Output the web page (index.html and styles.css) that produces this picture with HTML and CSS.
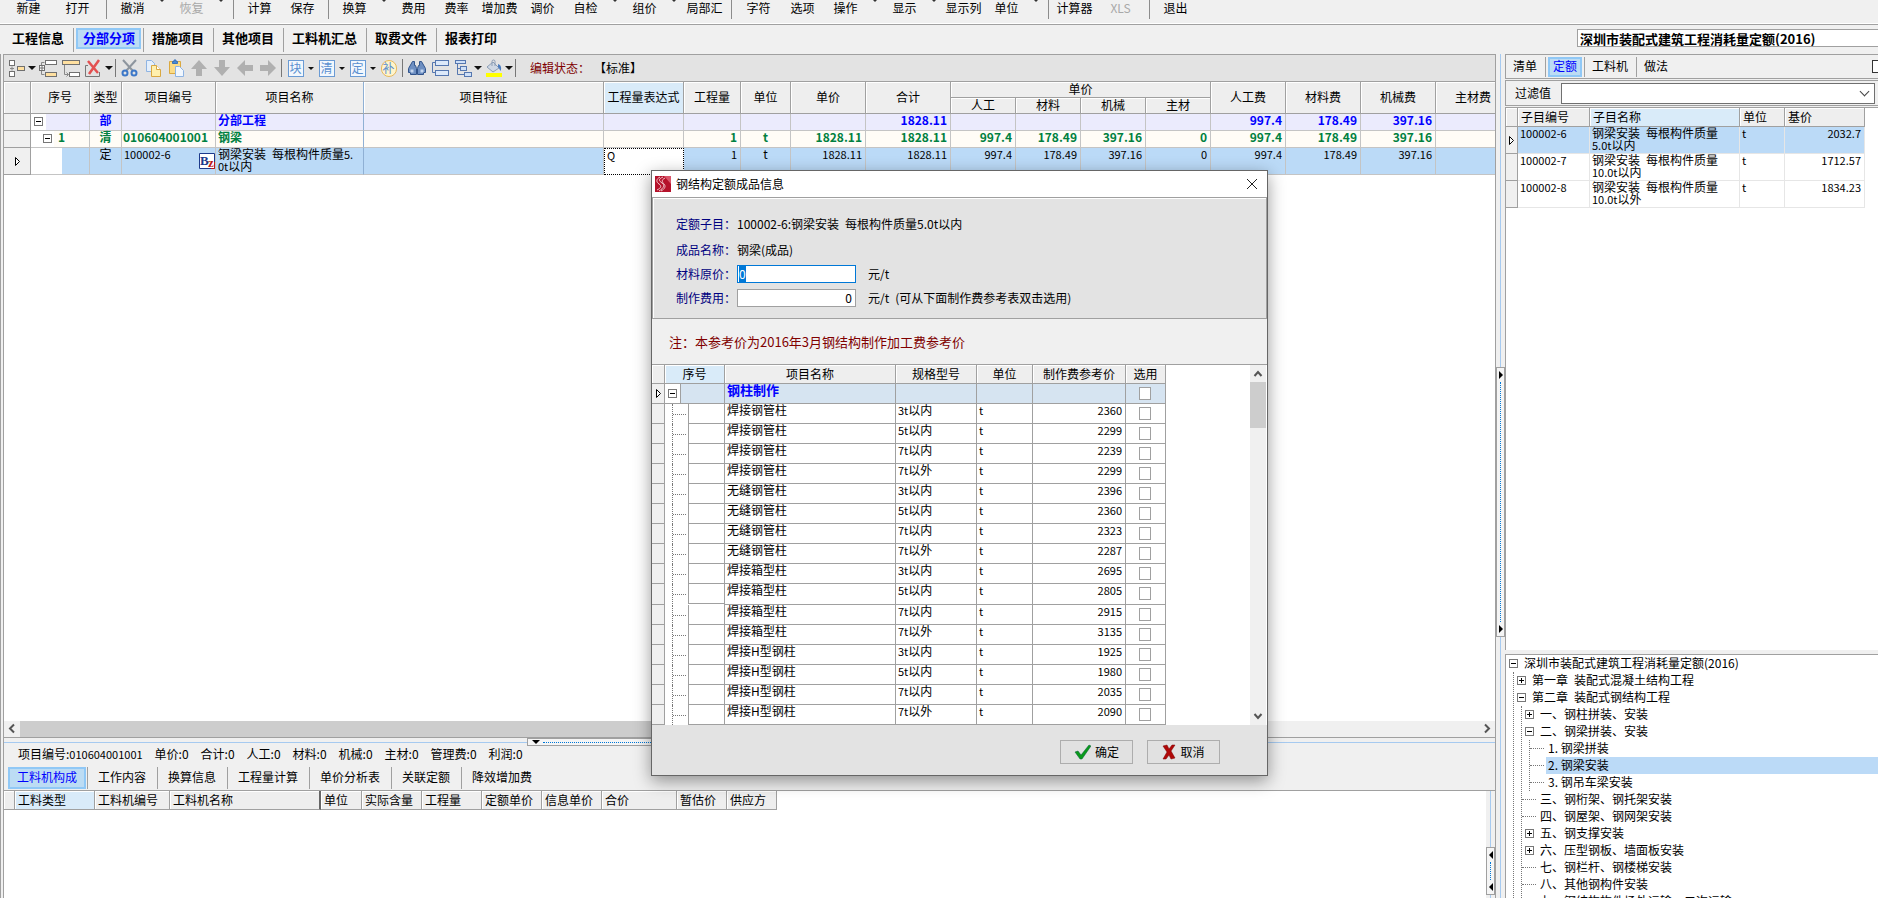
FILE: index.html
```
<!DOCTYPE html>
<html lang="zh-CN">
<head>
  <meta charset="UTF-8">
  <meta name="viewport" content="width=device-width, initial-scale=1.0">
  <title>钢结构定额成品信息</title>
  <link rel="stylesheet" href="styles.css">
</head>
<body>
  <nav class="toolbar">
    <button class="tool first blue">新建</button>
    <button class="tool first">打开</button>
    <span class="bar"></span>
    <button class="tool drop">撤消</button>
    <button class="tool drop" disabled>恢复</button>
    <span class="bar"></span>
    <button class="tool">计算</button>
    <button class="tool">保存</button>
    <span class="bar"></span>
    <button class="tool drop">换算</button>
    <button class="tool">费用</button>
    <button class="tool">费率</button>
    <button class="tool">增加费</button>
    <button class="tool">调价</button>
    <button class="tool drop">自检</button>
    <button class="tool drop">组价</button>
    <button class="tool wide">局部汇</button>
    <span class="bar"></span>
    <button class="tool wide">字符</button>
    <button class="tool">选项</button>
    <button class="tool drop">操作</button>
    <button class="tool drop">显示</button>
    <button class="tool">显示列</button>
    <button class="tool drop">单位</button>
    <span class="bar"></span>
    <button class="tool">计算器</button>
    <button class="tool first" disabled>XLS</button>
    <span class="bar"></span>
    <button class="tool">退出</button>
  </nav>

  <div class="page-bar">
    <nav class="page-tabs tabs">
      <button>工程信息</button>
      <button class="active">分部分项</button>
      <button>措施项目</button>
      <button>其他项目</button>
      <button>工料机汇总</button>
      <button>取费文件</button>
      <button>报表打印</button>
    </nav>
    <input class="quota-book" type="text" aria-label="定额库" value="深圳市装配式建筑工程消耗量定额(2016)">
  </div>

  <div class="workspace">
    <main class="main">
      <div class="tools">
        <button class="ico" aria-label="插入"><svg width="20" height="20" viewBox="0 0 20 20"><g fill="#fff" stroke="#707070"><rect x="2.500" y="2.500" width="5" height="5"/><rect x="2.500" y="13.500" width="5" height="5"/><rect x="10.500" y="8.500" width="7" height="4" fill="#ffe0a0"/></g><path d="M3 10.500h4M5 8.500v4" stroke="#888"/></svg></button>
        <span class="caret"></span>
        <button class="ico" aria-label="添加子项"><svg width="20" height="20" viewBox="0 0 20 20"><path d="M6.500 4.500h-3v3M3.500 13v3.500h3" fill="none" stroke="#888"/><g fill="#fff" stroke="#707070"><rect x="7.500" y="2.500" width="11" height="4"/><rect x="7.500" y="14.500" width="11" height="4" fill="#ffe0a0"/><rect x="1.500" y="7.500" width="5" height="5"/></g><path d="M1.500 10h5M4 7.500v5" stroke="#707070"/></svg></button>
        <button class="ico" aria-label="添加"><svg width="20" height="20" viewBox="0 0 20 20"><g fill="#fff" stroke="#707070"><rect x="1.500" y="2.500" width="17" height="4" fill="#ffe0a0"/><rect x="8.500" y="14.500" width="10" height="4"/></g><path d="M3.500 7v9.500h4M5.500 14.500l2 2-2 2" fill="none" stroke="#888"/></svg></button>
        <button class="ico" aria-label="删除"><svg width="20" height="20" viewBox="0 0 20 20"><path d="M4 7.500H1.500v11h14V14" fill="none" stroke="#777"/><path d="M4 3l10 12M15 2L5 16" stroke="#e35050" stroke-width="2.500"/></svg></button>
        <span class="caret"></span>
        <span class="cut"></span>
        <button class="ico" aria-label="剪切"><svg width="20" height="20" viewBox="0 0 20 20"><path d="M3 2l10 11M16 2L6 13" stroke="#8d959e" stroke-width="2"/><g fill="none" stroke="#3d78c8" stroke-width="2"><circle cx="5" cy="15" r="2.500"/><circle cx="14" cy="15" r="2.500"/></g></svg></button>
        <button class="ico" aria-label="复制"><svg width="20" height="20" viewBox="0 0 20 20"><path d="M3.500 2.500h5l3 3v8h-8z" fill="#e4effc" stroke="#8fb4e3"/><path d="M8.500 7.500h5l4 4v7h-9z" fill="#fff0ae" stroke="#d9a842"/><path d="M13.500 7.500v4h4" fill="#fff" stroke="#d9a842"/></svg></button>
        <button class="ico" aria-label="粘贴"><svg width="20" height="20" viewBox="0 0 20 20"><path d="M3.500 3.500h11v12h-11z" fill="#fbdc87" stroke="#dba940"/><path d="M6.500 5.500v-2h1.500v-1.500h2v1.500h1.500v2z" fill="#4a8ad4" stroke="#3b73b8"/><path d="M9.500 8.500h4l4 4v6h-8z" fill="#f1f7fe" stroke="#8fb4e3"/></svg></button>
        <button class="ico" aria-label="上移"><svg width="20" height="20" viewBox="0 0 20 20"><path d="M10 2l8 9h-5v7H7v-7H2z" fill="#b0b0b0"/></svg></button>
        <button class="ico" aria-label="下移"><svg width="20" height="20" viewBox="0 0 20 20"><path d="M10 18l8-9h-5V2H7v7H2z" fill="#b0b0b0"/></svg></button>
        <button class="ico" aria-label="左移"><svg width="20" height="20" viewBox="0 0 20 20"><path d="M2 10l8-8v5h8v6h-8v5z" fill="#b0b0b0"/></svg></button>
        <button class="ico" aria-label="右移"><svg width="20" height="20" viewBox="0 0 20 20"><path d="M18 10l-8-8v5H2v6h8v5z" fill="#b0b0b0"/></svg></button>
        <span class="cut"></span>
        <button class="ico"><span class="glyph">块</span></button>
        <span class="caret small"></span>
        <button class="ico"><span class="glyph">清</span></button>
        <span class="caret small"></span>
        <button class="ico"><span class="glyph">定</span></button>
        <span class="caret small"></span>
        <button class="ico"><span class="glyph patch">补</span></button>
        <span class="cut"></span>
        <button class="ico" aria-label="查找"><svg width="20" height="20" viewBox="0 0 20 20"><path d="M5.500 3.500h2v4h1l1 3v6h-6v-2h-2v-4zM12.500 3.500h2l4 7v4h-2v2h-6v-6l1-3h1z" fill="#6d8fc2" stroke="#31548c"/><path d="M3.500 11.500h3v3h-3zM13.500 11.500h3v3h-3z" fill="#c4d6ef"/></svg></button>
        <button class="ico" aria-label="展开"><svg width="20" height="20" viewBox="0 0 20 20"><path d="M5.500 4.500h-3v10h3" fill="none" stroke="#5577b0"/><rect x="5.500" y="2.500" width="13" height="5" fill="#dce9fa" stroke="#5577b0"/><rect x="5.500" y="12.500" width="13" height="5" fill="#dce9fa" stroke="#5577b0"/></svg></button>
        <button class="ico" aria-label="层级"><svg width="20" height="20" viewBox="0 0 20 20"><path d="M4.500 6v10.500h7M4.500 10.500h3" fill="none" stroke="#5577b0"/><g fill="#cfe0f7" stroke="#5577b0"><rect x="2.500" y="2.500" width="10" height="3"/><rect x="7.500" y="8.500" width="6" height="4"/><rect x="11.500" y="14.500" width="7" height="4"/></g></svg></button>
        <span class="caret"></span>
        <button class="ico" aria-label="填充颜色"><svg width="20" height="20" viewBox="0 0 20 20"><path d="M3 9l6-5 6 6-6 4z" fill="#cfd8e4" stroke="#8b9db5"/><path d="M8 8V3.500a1.500 1.500 0 013 0V8" fill="none" stroke="#8b9db5"/><path d="M14 6c3 1 4 4 2.500 7-1-1-1-3-2.500-4z" fill="#4a7cc0"/><path d="M2 15h16v4H2z" fill="#ffff00"/></svg></button>
        <span class="caret"></span>
        <span class="cut"></span>
        <span class="state-label">编辑状态：</span>
        <span>【标准】</span>
      </div>

      <div class="grid-area">
        <table class="grid bill">
          <colgroup>
            <col class="w27"><col class="w59"><col class="w32"><col class="w94"><col class="w148"><col class="w240"><col class="w80"><col class="w57"><col class="w50"><col class="w75"><col class="w85"><col class="w65"><col class="w65"><col class="w65"><col class="w65"><col class="w75"><col class="w75"><col class="w75"><col class="w75">
          </colgroup>
          <thead>
            <tr>
              <th rowspan="2"></th>
              <th rowspan="2">序号</th>
              <th rowspan="2">类型</th>
              <th rowspan="2">项目编号</th>
              <th rowspan="2" class="fixed-edge">项目名称</th>
              <th rowspan="2">项目特征</th>
              <th rowspan="2" class="hot">工程量表达式</th>
              <th rowspan="2">工程量</th>
              <th rowspan="2">单位</th>
              <th rowspan="2">单价</th>
              <th rowspan="2">合计</th>
              <th colspan="4" class="group">单价</th>
              <th rowspan="2">人工费</th>
              <th rowspan="2">材料费</th>
              <th rowspan="2">机械费</th>
              <th rowspan="2">主材费</th>
            </tr>
            <tr class="sub"><th>人工</th><th>材料</th><th>机械</th><th>主材</th></tr>
          </thead>
          <tbody>
            <tr class="section">
              <td class="rh"></td>
              <td class="lv1"><button class="box minus" aria-label="折叠"></button></td>
              <td class="c">部</td><td></td><td class="fixed-edge">分部工程</td><td></td><td></td><td></td><td></td><td></td>
              <td class="r">1828.11</td><td></td><td></td><td></td><td></td>
              <td class="r">997.4</td><td class="r">178.49</td><td class="r">397.16</td><td></td>
            </tr>
            <tr class="item">
              <td class="rh"></td>
              <td class="lv2"><button class="box minus" aria-label="折叠"></button>1</td>
              <td class="c">清</td><td class="bill-code">010604001001</td><td class="fixed-edge">钢梁</td><td></td><td></td>
              <td class="r">1</td><td class="c">t</td><td class="r">1828.11</td><td class="r">1828.11</td>
              <td class="r">997.4</td><td class="r">178.49</td><td class="r">397.16</td><td class="r">0</td>
              <td class="r">997.4</td><td class="r">178.49</td><td class="r">397.16</td><td></td>
            </tr>
            <tr class="quota">
              <td class="rh cur"><svg width="5" height="9" viewBox="0 0 5 9"><path d="M.5.5v8l4-4z" fill="#fff" stroke="#000"/></svg></td>
              <td class="lv3"></td>
              <td class="c">定</td>
              <td><div class="code"><span class="n">100002-6</span><svg width="16" height="16" viewBox="0 0 16 16"><path d="M.5.5h15v15H.5z" fill="#fff" stroke="#1c3a8c"/><path d="M12 15.500h3.500V9" fill="none" stroke="#c01818"/><text x="1" y="12" class="bz-b">B</text><text x="9" y="14" class="bz-z">z</text></svg></div></td>
              <td class="fixed-edge">钢梁安装&ensp;每根构件质量<span class="n">5.<br>0t</span>以内</td><td></td>
              <td class="edit">Q</td>
              <td class="r">1</td><td class="c">t</td><td class="r">1828.11</td><td class="r">1828.11</td>
              <td class="r">997.4</td><td class="r">178.49</td><td class="r">397.16</td><td class="r">0</td>
              <td class="r">997.4</td><td class="r">178.49</td><td class="r">397.16</td><td></td>
            </tr>
          </tbody>
        </table>
      </div>

      <div class="hscroll">
        <svg width="16" height="15" viewBox="0 0 16 15"><path d="M10 3.500l-4 4 4 4" fill="none" stroke="#555" stroke-width="2"/></svg>
        <span class="thumb"></span>
        <svg width="16" height="15" viewBox="0 0 16 15"><path d="M6 3.500l4 4-4 4" fill="none" stroke="#555" stroke-width="2"/></svg>
      </div>
      <div class="hsplit"><div class="handle"><i class="down"></i><span class="dots"></span><i class="down"></i></div></div>

      <div class="summary">
        <span>项目编号:<span class="n">010604001001</span></span>
        <span>单价:0</span><span>合计:0</span><span>人工:0</span><span>材料:0</span><span>机械:0</span><span>主材:0</span><span>管理费:0</span><span>利润:0</span>
      </div>
      <nav class="detail-tabs tabs">
        <button class="active">工料机构成</button>
        <button>工作内容</button>
        <button>换算信息</button>
        <button>工程量计算</button>
        <button>单价分析表</button>
        <button>关联定额</button>
        <button>降效增加费</button>
      </nav>
      <div class="detail">
        <div class="detail-grid">
          <table class="grid left-heads">
            <colgroup><col class="w11"><col class="w80"><col class="w75"><col class="w151"><col class="w41"><col class="w60"><col class="w60"><col class="w60"><col class="w60"><col class="w75"><col class="w50"><col class="w50"></colgroup>
            <thead><tr><th></th><th class="hot">工料类型</th><th>工料机编号</th><th class="thick">工料机名称</th><th>单位</th><th>实际含量</th><th>工程量</th><th>定额单价</th><th>信息单价</th><th>合价</th><th>暂估价</th><th>供应方</th></tr></thead>
          </table>
        </div>
        <div class="vsplit low"><div class="handle"><i class="left"></i><span class="dots"></span><i class="left"></i></div></div>
      </div>
    </main>

    <div class="vsplit"><div class="handle"><i class="right"></i><span class="dots"></span><i class="right"></i></div></div>

    <aside class="side">
      <nav class="side-tabs tabs">
        <button>清单</button>
        <button class="active">定额</button>
        <button>工料机</button>
        <button>做法</button>
        <input type="checkbox" aria-label="固定">
      </nav>
      <div class="filter">
        <label for="filter">过滤值</label>
        <div class="combo"><select id="filter"><option></option></select></div>
      </div>
      <div class="side-grid">
        <table class="grid left-heads">
          <colgroup><col class="w12"><col class="w72"><col class="w150"><col class="w45"><col class="w80"></colgroup>
          <thead><tr><th></th><th>子目编号</th><th class="hot">子目名称</th><th>单位</th><th>基价</th></tr></thead>
          <tbody>
            <tr class="selected"><td class="rh cur"><svg width="5" height="9" viewBox="0 0 5 9"><path d="M.5.5v8l4-4z" fill="#fff" stroke="#000"/></svg></td><td class="n">100002-6</td><td>钢梁安装&ensp;每根构件质量<br><span class="n">5.0t</span>以内</td><td class="n">t</td><td class="r">2032.7</td></tr>
            <tr><td class="rh"></td><td class="n">100002-7</td><td>钢梁安装&ensp;每根构件质量<br><span class="n">10.0t</span>以内</td><td class="n">t</td><td class="r">1712.57</td></tr>
            <tr><td class="rh"></td><td class="n">100002-8</td><td>钢梁安装&ensp;每根构件质量<br><span class="n">10.0t</span>以外</td><td class="n">t</td><td class="r">1834.23</td></tr>
          </tbody>
        </table>
      </div>
      <div class="tree">
        <div class="node"><button class="box minus" aria-label="折叠"></button><span>深圳市装配式建筑工程消耗量定额(2016)</span></div>
        <ul>
          <li><div class="node"><button class="box plus" aria-label="展开"></button><span>第一章&ensp;装配式混凝土结构工程</span></div></li>
          <li>
            <div class="node"><button class="box minus" aria-label="折叠"></button><span>第二章&ensp;装配式钢结构工程</span></div>
            <ul>
              <li><div class="node"><button class="box plus" aria-label="展开"></button><span>一、钢柱拼装、安装</span></div></li>
              <li>
                <div class="node"><button class="box minus" aria-label="折叠"></button><span>二、钢梁拼装、安装</span></div>
                <ul class="short">
                  <li><div class="node leaf"><span>1. 钢梁拼装</span></div></li>
                  <li><div class="node leaf"><span class="picked">2. 钢梁安装</span></div></li>
                  <li><div class="node leaf"><span>3. 钢吊车梁安装</span></div></li>
                </ul>
              </li>
              <li><div class="node leaf"><span>三、钢桁架、钢托架安装</span></div></li>
              <li><div class="node leaf"><span>四、钢屋架、钢网架安装</span></div></li>
              <li><div class="node"><button class="box plus" aria-label="展开"></button><span>五、钢支撑安装</span></div></li>
              <li><div class="node"><button class="box plus" aria-label="展开"></button><span>六、压型钢板、墙面板安装</span></div></li>
              <li><div class="node leaf"><span>七、钢栏杆、钢楼梯安装</span></div></li>
              <li><div class="node leaf"><span>八、其他钢构件安装</span></div></li>
              <li><div class="node leaf"><span>九、钢结构构件场外运输、二次运输</span></div></li>
            </ul>
          </li>
        </ul>
      </div>
    </aside>
  </div>

  <section class="dialog" role="dialog" aria-labelledby="dialog-title">
    <header>
      <svg width="16" height="16" viewBox="0 0 16 16"><path d="M0 0h16v16H0z" fill="#b5122b"/><path d="M9 0h7v8z" fill="#d9566a"/><path d="M8 1C3 3 4 5 7 7s2 5-3 8M5 1C1 3 1 6 4 8s2 4-2 6M10 2C6 4 7 6 9 8s1 5-3 7" fill="none" stroke="#f3c9cf"/></svg>
      <h1 id="dialog-title">钢结构定额成品信息</h1>
      <button class="close" aria-label="关闭"><svg width="12" height="12" viewBox="0 0 12 12"><path d="M1 1l10 10M11 1L1 11" stroke="#222" fill="none"/></svg></button>
    </header>
    <div class="form">
      <div class="field"><span class="name">定额子目：</span><span>100002-6:钢梁安装&ensp;每根构件质量5.0t以内</span></div>
      <div class="field"><span class="name">成品名称：</span><span>钢梁(成品)</span></div>
      <div class="field"><label class="name" for="raw-price">材料原价：</label><input id="raw-price" type="text" value="0"><span class="unit">元/t</span></div>
      <div class="field"><label class="name" for="make-cost">制作费用：</label><input id="make-cost" class="amount" type="text" value="0"><span class="unit">元/t&ensp;(可从下面制作费参考表双击选用)</span></div>
    </div>
    <p class="note">注：本参考价为2016年3月钢结构制作加工费参考价</p>
    <div class="price-list">
      <table class="grid prices">
        <colgroup><col class="w13"><col class="w60"><col class="w171"><col class="w81"><col class="w56"><col class="w93"><col class="w40"></colgroup>
        <thead><tr><th></th><th class="hot">序号</th><th>项目名称</th><th>规格型号</th><th>单位</th><th>制作费参考价</th><th>选用</th></tr></thead>
        <tbody id="prices">
          <tr class="group-row">
            <td class="rh cur"><svg width="5" height="9" viewBox="0 0 5 9"><path d="M.5.5v8l4-4z" fill="#fff" stroke="#000"/></svg></td>
            <td class="root"><button class="box minus" aria-label="折叠"></button></td>
            <td class="title">钢柱制作</td><td></td><td></td><td></td>
            <td class="tick"><input type="checkbox" aria-label="钢柱制作"></td>
          </tr>
        </tbody>
      </table>
      <div class="vscroll">
        <svg width="16" height="17" viewBox="0 0 16 17"><path d="M4.500 11l3.500-4 3.500 4" fill="none" stroke="#555" stroke-width="2"/></svg>
        <span class="thumb"></span>
        <svg width="16" height="17" viewBox="0 0 16 17"><path d="M4.500 6l3.500 4 3.500-4" fill="none" stroke="#555" stroke-width="2"/></svg>
      </div>
    </div>
    <footer>
      <button><svg width="17" height="16" viewBox="0 0 17 16"><path d="M1 8l3-1 3 4 8-10 2 1-9 13H6z" fill="#0a9a1a" stroke="#045c3a" stroke-width=".5"/></svg>确定</button>
      <button><svg width="14" height="16" viewBox="0 0 14 16"><path d="M1 2l4-1 2 4 3-4h3L9 7l4 7-4 1-2-4-3 4H1l4-7z" fill="#b00808" stroke="#7a0000" stroke-width=".5"/></svg>取消</button>
    </footer>
  </section>

  <script>
    const prices = [
      ['焊接钢管柱', '3t', '以内', 2360],
      ['焊接钢管柱', '5t', '以内', 2299],
      ['焊接钢管柱', '7t', '以内', 2239],
      ['焊接钢管柱', '7t', '以外', 2299],
      ['无缝钢管柱', '3t', '以内', 2396],
      ['无缝钢管柱', '5t', '以内', 2360],
      ['无缝钢管柱', '7t', '以内', 2323],
      ['无缝钢管柱', '7t', '以外', 2287],
      ['焊接箱型柱', '3t', '以内', 2695],
      ['焊接箱型柱', '5t', '以内', 2805],
      ['焊接箱型柱', '7t', '以内', 2915],
      ['焊接箱型柱', '7t', '以外', 3135],
      ['焊接H型钢柱', '3t', '以内', 1925],
      ['焊接H型钢柱', '5t', '以内', 1980],
      ['焊接H型钢柱', '7t', '以内', 2035],
      ['焊接H型钢柱', '7t', '以外', 2090]
    ];

    const body = document.getElementById('prices');
    prices.forEach(([name, size, limit, price]) => {
      body.insertAdjacentHTML('beforeend', `
        <tr>
          <td class="rh"></td>
          <td class="branch"><div><span class="twig"></span><span class="slot"></span></div></td>
          <td>${name}</td>
          <td><span class="n">${size}</span>${limit}</td>
          <td class="n">t</td>
          <td class="r">${price}</td>
          <td class="tick"><input type="checkbox" aria-label="${name} ${size}${limit}"></td>
        </tr>`);
    });

    // the first price box opens with its value selected
    const rawPrice = document.getElementById('raw-price');
    rawPrice.focus();
    rawPrice.select();
  </script>
</body>
</html>
```
FILE: styles.css
```
:root {
  --face: #f0f0f0;
  --panel: #e3e3e3;
  --line: #a0a0a0;
  --cell: #c4c4c4;
  --hot: #d9ebf9;
  --pick: #bbdaf7;
  --tab: #bcdcf4;
  --tab-edge: #90c8f6;
}

* {
  box-sizing: border-box;
}

body {
  margin: 0;
  height: 100vh;
  display: flex;
  flex-direction: column;
  overflow: hidden;
  background: var(--face);
  color: #000;
  font: 12px/12px "Noto Sans CJK SC", sans-serif;
}

button, input, select {
  font: inherit;
  color: inherit;
}

button {
  padding: 0;
  border: 0;
  background: none;
  white-space: nowrap;
}

svg {
  flex: none;
  display: block;
}

.n {
  font-size: 11px;
}

/* top toolbar */
.toolbar {
  display: flex;
  height: 25px;
  padding-left: 4px;
  border-bottom: 1px solid var(--line);
  box-shadow: inset 0 -1px #fff;
  flex: none;
}

.tool {
  position: relative;
  width: 43px;
  height: 16px;
}

.tool.first {
  width: 49px;
}

.tool.wide {
  width: 45px;
}

.tool.drop {
  width: 59px;
  padding-right: 16px;
}

.tool.drop::after {
  content: "";
  position: absolute;
  top: 0;
  right: 6px;
  border: 2px solid transparent;
  border-top-color: #333;
}

.tool.blue::after {
  content: "";
  position: absolute;
  top: 0;
  left: 22px;
  width: 10px;
  height: 1px;
  background: #3a5fae;
}

.tool:disabled {
  color: #a8a8a8;
}

.bar {
  width: 1px;
  height: 19px;
  margin: 0 4px;
  background: #8c8c8c;
}

/* tab strips: a rule between neighbours, the open tab boxed in blue */
.tabs {
  display: flex;
}

.tabs button + button {
  border-left: 1px solid var(--line);
}

.tabs button:has(+ .active) {
  border-right: 1px solid var(--line);
}

.tabs button.active {
  border: 1px solid var(--tab-edge);
  box-shadow: inset 0 0 0 1px var(--tab-edge);
  background: var(--tab);
  color: #00f;
}

.page-bar {
  display: flex;
  justify-content: space-between;
  height: 29px;
  flex: none;
}

.page-tabs {
  padding: 3px 0 0 4px;
}

.page-tabs button {
  height: 24px;
  padding: 0 9px 4px 8px;
  font-size: 13px;
  font-weight: bold;
}

.page-tabs button.active {
  height: 21px;
  margin: 0 2px;
  padding: 0 5px 2px 6px;
}

.quota-book {
  width: 301px;
  height: 18px;
  margin-top: 4px;
  padding: 0 2px;
  border: 1px solid var(--line);
  border-right: 0;
  background: #fff;
  font-size: 13px;
  font-weight: bold;
}

/* workspace */
.workspace {
  display: flex;
  flex: 1;
  min-height: 0;
  border-left: 1px solid var(--line);
}

.main {
  display: flex;
  flex-direction: column;
  flex: 1;
  min-width: 0;
  margin-left: 2px;
  border: 1px solid var(--line);
  border-width: 1px 1px 0;
}

.tools {
  display: flex;
  align-items: center;
  height: 27px;
  padding-left: 1px;
  background: var(--panel);
  border-bottom: 1px solid var(--line);
  flex: none;
}

.ico {
  display: flex;
  align-items: center;
  justify-content: center;
  width: 23px;
  height: 22px;
}

.caret {
  width: 8px;
  border: 4px solid transparent;
  border-top: 4px solid #111;
  border-bottom: 0;
}

.caret.small {
  border-width: 3px 3px 0;
  width: 6px;
  margin: 0 1px;
}

.cut {
  width: 1px;
  height: 18px;
  margin: 0 2px;
  background: #777;
}

.glyph {
  width: 16px;
  height: 17px;
  border: 1px solid #6a9bd4;
  background: #f2f7fd;
  color: #5a8fd0;
  line-height: 14px;
}

.glyph.patch {
  border-radius: 8px;
  border-color: #e6b95c;
  background: #fff4cc;
}

.state-label {
  margin: 0 4px 0 12px;
  color: #800000;
}

.grid-area {
  flex: 1;
  min-height: 0;
  overflow: hidden;
  background: #fff;
}

/* grids */
.grid {
  table-layout: fixed;
  width: 0;
  border-collapse: separate;
  border-spacing: 0;
}

.grid th {
  height: 19px;
  padding: 0 0 1px;
  border-right: 1px solid var(--line);
  border-bottom: 1px solid var(--line);
  background: #eee;
  box-shadow: inset 1px 1px #fff;
  font-weight: normal;
  white-space: nowrap;
  overflow: hidden;
}

.grid th.hot {
  background: var(--hot);
}

.grid.left-heads th {
  padding-left: 3px;
  text-align: left;
}

.grid td {
  height: 17px;
  padding: 0 2px;
  border-right: 1px solid var(--cell);
  border-bottom: 1px solid var(--cell);
  vertical-align: top;
  white-space: nowrap;
}

.grid .rh {
  padding: 0;
  background: var(--face);
  border-color: var(--line);
  vertical-align: middle;
}

.rh svg {
  margin: 0 auto;
}

.grid .c {
  text-align: center;
}

.grid .r {
  padding-right: 3px;
  text-align: right;
  font-size: 11px;
}

.grid th.thick {
  border-right: 2px solid #666;
}

.bill thead tr,
.bill .group {
  height: 16px;
}

.grid.bill th {
  padding-bottom: 2px;
}

.bill .sub th {
  height: 15px;
}

.bill .fixed-edge {
  border-right-color: #8fb0d4;
}

.bill .section td,
.bill .item td {
  font-size: 12px;
  font-weight: bold;
}

.bill .item .bill-code {
  padding: 0 0 0 1px;
}

.section {
  background: #ebebfd;
  color: #00f;
}

.item {
  background: #fffcf6;
  color: #008040;
}

.quota, .selected {
  background: var(--pick);
}

.bill .quota td,
.side-grid .grid td {
  height: 27px;
}

.grid .lv1 {
  background: linear-gradient(to right, #fff 15px, transparent 15px);
}

.grid .lv2 {
  padding-left: 11px;
  background: linear-gradient(to right, #fff 23px, transparent 23px);
}

.grid .lv3 {
  background: linear-gradient(to right, #fff 31px, transparent 31px);
}

.code {
  display: flex;
  justify-content: space-between;
}

.code svg {
  margin: 5px -2px 0 0;
}

.bz-b, .bz-z {
  font: bold 13px "Liberation Serif", serif;
  fill: #1c3a8c;
}

.bz-z {
  fill: #c01818;
}

.grid .edit {
  background: #fff;
  border: 1px dotted #000;
  font-size: 11px;
}

/* expander boxes */
.box {
  position: relative;
  display: inline-block;
  flex: none;
  width: 9px;
  height: 9px;
  border: 1px solid #777;
  background: #fff;
}

.box::before,
.box.plus::after {
  content: "";
  position: absolute;
  left: 1px;
  top: 3px;
  width: 5px;
  height: 1px;
  background: #000;
}

.box.plus::after {
  left: 3px;
  top: 1px;
  width: 1px;
  height: 5px;
}

.lv1 .box, .lv2 .box {
  margin: 3px 6px 0 1px;
  vertical-align: top;
}

/* scroll bar and splitters */
.hscroll {
  display: flex;
  height: 16px;
  background: var(--face);
  flex: none;
}

.hscroll .thumb {
  flex: 1;
  margin-right: 240px;
  background: #cdcdcd;
}

.hsplit {
  display: flex;
  justify-content: center;
  height: 9px;
  border-top: 1px solid var(--line);
  background: linear-gradient(var(--face) 4px, #a6caf0 4px, #a6caf0 5px, var(--face) 5px);
  flex: none;
}

.handle {
  display: flex;
  align-items: center;
  justify-content: space-between;
  border: 1px solid var(--line);
  background: #f5f5f5;
}

.hsplit .handle {
  width: 446px;
  padding: 0 4px;
}

.dots {
  flex: 1;
  margin: 0 3px;
  border-top: 1px dotted #0078d7;
}

.handle i {
  border: 4px solid transparent;
}

.handle .down {
  border-top-color: #000;
  border-bottom: 0;
}

.handle .right {
  border-left-color: #000;
  border-right: 0;
}

.handle .left {
  border-right-color: #000;
  border-left: 0;
}

.vsplit {
  display: flex;
  align-items: center;
  width: 9px;
  background: linear-gradient(to right, var(--face) 4px, #a6caf0 4px, #a6caf0 5px, var(--face) 5px);
  flex: none;
}

.vsplit .handle {
  flex-direction: column;
  width: 9px;
  height: 270px;
  padding: 3px 0;
  margin-top: 52px;
}

.vsplit .dots {
  margin: 3px 0;
  border-top: 0;
  border-left: 1px dotted #0078d7;
}

.vsplit.low .handle {
  height: 48px;
}

/* lower panel */
.summary {
  display: flex;
  align-items: center;
  gap: 12px;
  height: 20px;
  padding: 0 0 4px 14px;
  flex: none;
}

.detail-tabs {
  height: 25px;
  padding: 1px 0 0 4px;
  border-bottom: 1px solid var(--line);
  flex: none;
}

.detail-tabs button {
  height: 22px;
  padding: 0 11px 2px 10px;
}

.detail-tabs button.active {
  margin-right: 1px;
  padding: 0 8px 2px;
}

.detail {
  display: flex;
  height: 107px;
  flex: none;
}

.detail-grid {
  flex: 1;
  min-width: 0;
  background: #fff;
}

/* right panel */
.side {
  display: flex;
  flex-direction: column;
  width: 373px;
  flex: none;
}

.side-tabs {
  align-items: center;
  height: 25px;
  border: 1px solid var(--line);
  border-right: 0;
  flex: none;
}

.side-tabs button {
  height: 20px;
  padding: 0 8px 1px 7px;
}

.side-tabs button.active {
  margin: 0 2px;
  padding: 0 4px 1px;
}

input[type="checkbox"] {
  appearance: none;
  width: 12px;
  height: 13px;
  margin: 0;
  border: 1px solid var(--line);
  background: #fff;
}

.side-tabs input[type="checkbox"] {
  margin: 0 -6px 0 auto;
  border-color: #333;
  flex: none;
}

.filter {
  display: flex;
  align-items: center;
  height: 26px;
  margin-top: 1px;
  padding: 0 3px 0 9px;
  border: 1px solid var(--line);
  border-right: 0;
  gap: 10px;
  flex: none;
}

.combo {
  position: relative;
  flex: 1;
}

.combo select {
  display: block;
  appearance: none;
  width: 100%;
  height: 21px;
  border: 1px solid #707070;
  border-radius: 0;
  background: #fff;
}

.combo::after {
  content: "";
  position: absolute;
  top: 5px;
  right: 7px;
  width: 6px;
  height: 6px;
  border: 1px solid #444;
  border-width: 0 1px 1px 0;
  transform: rotate(45deg);
}

.side-grid {
  flex: 1;
  min-height: 0;
  margin-top: 1px;
  border: 1px solid var(--line);
  border-width: 1px 0 0 1px;
  background: #fff;
}

.side-grid .grid td {
  border-color: #e6e6e6;
}

.side-grid .grid .rh {
  border-color: var(--line);
}

.tree {
  height: 244px;
  margin-top: 4px;
  overflow: hidden;
  border: 1px solid var(--line);
  border-width: 1px 0 0 1px;
  background: #fff;
  flex: none;
}

.tree ul {
  margin: 0 0 0 7px;
  padding: 0;
  list-style: none;
  border-left: 1px dotted #777;
}

.node {
  display: flex;
  align-items: center;
  height: 17px;
  padding-left: 3px;
  white-space: nowrap;
}

.node span {
  flex: 1;
  margin-left: 4px;
  padding: 0 0 2px 2px;
  line-height: 15px;
}

.node.leaf {
  padding-left: 0;
}

.node.leaf::before {
  content: "";
  width: 14px;
  border-top: 1px dotted #777;
}

.node.leaf span {
  margin-left: 2px;
}

.node .picked {
  background: var(--pick);
}

/* dialog */
.dialog {
  position: absolute;
  left: 651px;
  top: 170px;
  width: 617px;
  border: 1px solid #666;
  background: var(--face);
  box-shadow: 0 5px 16px rgba(0, 0, 0, 0.4);
}

.dialog header {
  display: flex;
  align-items: center;
  gap: 5px;
  height: 26px;
  padding: 0 9px 1px 3px;
  background: #fff;
}

.dialog h1 {
  margin: 0;
  font-size: 12px;
  line-height: 12px;
  font-weight: normal;
}

.close {
  margin-left: auto;
}

.form {
  height: 122px;
  padding: 12px 0 0 23px;
  border: 1px solid var(--line);
  background: var(--panel);
  box-shadow: inset 1px 1px #fff;
}

.field {
  display: flex;
  align-items: center;
  height: 24px;
}

.field:first-child {
  height: 28px;
}

.name {
  width: 61px;
  color: #000080;
}

.field input {
  width: 119px;
  height: 18px;
  padding: 0 1px 2px;
  border: 1px solid var(--line);
  background: #fff;
}

.field input:focus {
  outline: 0;
  border-color: #0078d7;
}

.field input::selection {
  background: #0078d7;
  color: #fff;
}

.field .amount {
  padding-right: 3px;
  text-align: right;
}

.unit {
  margin-left: 12px;
}

.note {
  margin: 0;
  padding-left: 17px;
  color: #800000;
  font-size: 13px;
  line-height: 45px;
}

.price-list {
  display: flex;
  justify-content: space-between;
  height: 361px;
  border-top: 1px solid var(--line);
  background: #fff;
}

.prices td {
  height: 20px;
  border-color: var(--line);
}

.group-row {
  background: #d6e4f1;
}

.group-row .title {
  color: #00f;
  font-size: 13px;
  font-weight: bold;
}

.prices .root {
  padding: 5px 0 0 3px;
  background: linear-gradient(to right, #fff 15px, var(--line) 15px, var(--line) 16px, transparent 16px);
}

.root .box {
  display: block;
}

.prices .branch {
  padding: 0 0 0 7px;
  border-bottom: 0;
}

.branch div {
  display: flex;
  height: 20px;
}

.twig {
  width: 16px;
  border-left: 1px dotted #777;
  background: repeating-linear-gradient(to right, #777 0 1px, transparent 1px 2px) 0 10px / 14px 1px no-repeat;
}

.slot {
  flex: 1;
  border-left: 1px solid var(--line);
  border-bottom: 1px solid var(--line);
}

.prices .tick {
  padding: 3px 0 0 13px;
}

.tick input {
  display: block;
}

.vscroll {
  display: flex;
  flex-direction: column;
  width: 16px;
  margin-right: 1px;
  background: var(--face);
}

.vscroll .thumb {
  height: 46px;
  margin-bottom: auto;
  background: #cdcdcd;
}

.dialog footer {
  display: flex;
  justify-content: flex-end;
  gap: 14px;
  height: 50px;
  padding: 15px 47px 0 0;
  background: var(--panel);
}

.dialog footer button {
  display: flex;
  align-items: center;
  justify-content: center;
  gap: 4px;
  width: 73px;
  height: 24px;
  border: 1px solid #adadad;
  background: #e1e1e1;
}

/* column widths */
.w11 { width: 11px; }
.w12 { width: 12px; }
.w13 { width: 13px; }
.w27 { width: 27px; }
.w32 { width: 32px; }
.w40 { width: 40px; }
.w41 { width: 41px; }
.w45 { width: 45px; }
.w50 { width: 50px; }
.w56 { width: 56px; }
.w57 { width: 57px; }
.w59 { width: 59px; }
.w60 { width: 60px; }
.w65 { width: 65px; }
.w72 { width: 72px; }
.w75 { width: 75px; }
.w80 { width: 80px; }
.w81 { width: 81px; }
.w85 { width: 85px; }
.w93 { width: 93px; }
.w94 { width: 94px; }
.w148 { width: 148px; }
.w150 { width: 150px; }
.w151 { width: 151px; }
.w171 { width: 171px; }
.w240 { width: 240px; }
```
